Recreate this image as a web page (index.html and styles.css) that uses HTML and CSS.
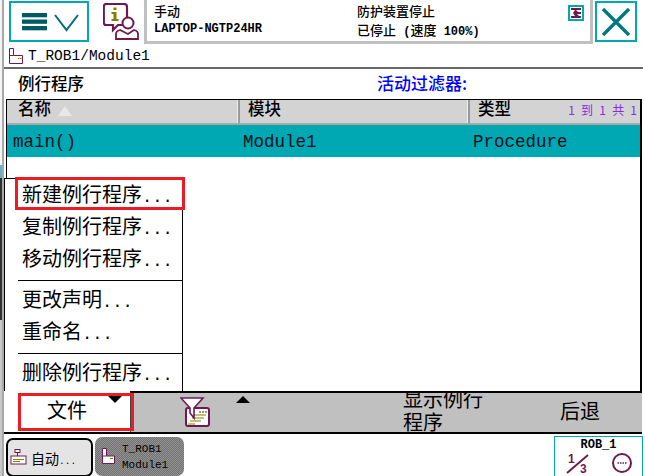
FILE: index.html
```html
<!DOCTYPE html>
<html lang="zh">
<head>
<meta charset="utf-8">
<title>例行程序</title>
<link rel="stylesheet" href="styles.css">
</head>
<body>
<div class="edge"></div>
<div class="app">
  <header class="top">
    <button class="menu-btn">
      <svg width="70" height="36" viewBox="0 0 70 36"><g fill="#005a64"><rect x="11" y="9" width="25" height="4.300"/><rect x="11" y="15.500" width="25" height="4.300"/><rect x="11" y="22" width="25" height="4.300"/></g><path d="M44 11 L55.500 26 L67 11" fill="none" stroke="#006e78" stroke-width="2"/></svg>
    </button>
    <svg class="info" width="38" height="38" viewBox="0 0 38 38"><path d="M3 1 H21 Q24 1 24 4 V19 Q24 22 21 22 H15 L10 27 V22 H3 Q0.800 22 0.800 19 V4 Q0.800 1 3 1 Z" fill="#fff" stroke="#6e1a50" stroke-width="2.200"/><rect x="10.500" y="4.500" width="3" height="2.500" fill="#808000"/><path d="M8.500 9 H13.500 V16 H15.500 V18 H8.500 V16 H10.500 V11 H8.500 Z" fill="#808000"/><circle cx="25" cy="20" r="5.500" fill="#fff" stroke="#6e1a50" stroke-width="2"/><path d="M13 36 V31 Q13 28 17 27 L25 31 L31 27 Q35 28 35 31 V36 Z" fill="#fff" stroke="#6e1a50" stroke-width="1.800"/></svg>
    <div class="status">
      <div class="col-a">
        <div class="cjk">手动</div>
        <div class="lat">LAPTOP-NGTP24HR</div>
      </div>
      <div class="col-b">
        <div class="cjk">防护装置停止</div>
        <div class="cjk">已停止<span class="lat"> (</span>速度<span class="lat"> 100%)</span></div>
      </div>
      <svg class="mini" width="16" height="16" viewBox="0 0 16 16"><rect x="1" y="1" width="14" height="14" fill="#fff" stroke="#00a8b4" stroke-width="2"/><path d="M3 3 H13 V5 H8 L10 7 H13 V9 L9 9 L11 11 H13 V13 H3 V11 H7 L5 8 L7 5 H3 Z" fill="#6e1a50"/></svg>
    </div>
    <button class="close-btn">
      <svg width="36" height="36" viewBox="0 0 36 36"><path d="M5 5 L31 31 M31 5 L5 31" stroke="#007882" stroke-width="3.400"/></svg>
    </button>
  </header>

  <div class="path">
    <svg width="16" height="16" viewBox="0 0 16 16"><path d="M1.500 .5 H5.500 V7.500 H14.500 V15.500 H1.500 Z M1.500 7.500 H5.500" fill="#fff" stroke="#6e1a50" stroke-width="1"/><rect x="10" y="10" width="1.500" height="1" fill="#808000"/><rect x="12" y="10" width="1.500" height="1" fill="#808000"/></svg>
    <span class="path-text">T_ROB1/Module1</span>
  </div>

  <main class="content">
    <div class="title-row">
      <span class="title">例行程序</span>
      <span class="filter">活动过滤器:</span>
    </div>
    <div class="table">
      <div class="thead">
        <div class="th c1">名称<span class="sort"></span></div>
        <div class="th c2">模块</div>
        <div class="th c3">类型<span class="count">1 到 1 共 1</span></div>
      </div>
      <div class="row">
        <div class="c1">main()</div>
        <div class="c2">Module1</div>
        <div class="c3">Procedure</div>
      </div>
    </div>

    <div class="menu">
      <div class="item hot">新建例行程序<span class="dots">...</span></div>
      <div class="item">复制例行程序<span class="dots">...</span></div>
      <div class="item">移动例行程序<span class="dots">...</span></div>
      <div class="sep"></div>
      <div class="item">更改声明<span class="dots">...</span></div>
      <div class="item">重命名<span class="dots">...</span></div>
      <div class="sep"></div>
      <div class="item">删除例行程序<span class="dots">...</span></div>
    </div>
  </main>

  <nav class="cmd">
    <div class="cmd-file"><span>文件</span><i class="tri-down"></i></div>
    <div class="cmd-rest">
      <div class="cmd-filter">
        <svg width="32" height="32" viewBox="0 0 32 32"><rect x="6" y="11" width="23" height="18" rx="2" fill="#fff" stroke="#6e1a50" stroke-width="2"/><rect x="19" y="14" width="2" height="2" fill="#a0a060"/><rect x="22" y="14" width="2" height="2" fill="#a0a060"/><rect x="25" y="14" width="2" height="2" fill="#a0a060"/><path d="M13 18 H26 M12 21 H24 M10 24 H21 M8 27 H15" stroke="#808000" stroke-width="1"/><path d="M1 1 H23 L14 11 V21 L10 16 V11 Z" fill="#fff" stroke="#6e1a50" stroke-width="1.600"/></svg>
        <i class="tri-up"></i>
      </div>
      <div class="cmd-show">显示例行程序</div>
      <div class="cmd-back">后退</div>
    </div>
  </nav>

  <footer class="task">
    <button class="task-auto">
      <svg width="17" height="17" viewBox="0 0 17 17"><rect x="5" y="0.500" width="5" height="3" fill="#fff" stroke="#6e1a50"/><path d="M7.500 3 V7" stroke="#6e1a50"/><rect x="1" y="7" width="15" height="8" fill="#fff" stroke="#6e1a50"/><path d="M3 10.500 H14 M3 12.500 H10" stroke="#808000"/></svg>
      <span>自动<span class="dots">...</span></span>
    </button>
    <button class="task-mod">
      <svg width="16" height="17" viewBox="0 0 16 17"><path d="M2.500 .5 H6.500 V8 H14.500 V15.500 H2.500 Z M2.500 8 H6.500" fill="#fff" stroke="#6e1a50"/><rect x="10" y="10" width="3" height="1" fill="#808000"/></svg>
      <span class="task-text">T_ROB1<br>Module1</span>
    </button>
    <div class="quick">
      <div class="quick-name">ROB_1</div>
      <div class="quick-icons">
        <svg width="26" height="22" viewBox="0 0 26 22"><text x="2" y="10" class="frac">1</text><path d="M1 20 L22 2" stroke="#6e1a50" stroke-width="2"/><text x="14" y="20" class="frac">3</text></svg>
        <svg width="22" height="22" viewBox="0 0 22 22"><circle cx="11" cy="10" r="9" fill="none" stroke="#6e1a50" stroke-width="2"/><path d="M6.500 10 H15.500" stroke="#6e1a50" stroke-width="1.600" stroke-dasharray="1.500 1"/></svg>
      </div>
    </div>
  </footer>
</div>
</body>
</html>
```
FILE: styles.css
```css
*, *::after { box-sizing: border-box; }
html, body { margin: 0; padding: 0; }
body {
  width: 645px;
  height: 476px;
  overflow: hidden;
  background: #fff;
  display: flex;
  font-family: "Liberation Mono", "Noto Sans CJK SC", monospace;
  color: #000;
}
button { font: inherit; padding: 0; margin: 0; color: inherit; }
.edge {
  width: 4px;
  flex: none;
  background:
    linear-gradient(#a8a8a8 0 0) right / 2px 100% no-repeat,
    linear-gradient(#f4f4f4 0 165px, #5fb4c8 165px 178px, #303030 178px 320px, #c8c8c8 320px);
}
.app { width: 641px; display: flex; flex-direction: column; }

.top { height: 44px; display: flex; align-items: flex-start; flex: none; }
.menu-btn {
  width: 80px; height: 41px; margin: 1px 0 0 5px;
  border: 2px solid #00a8b4; background: #fff;
  display: flex; align-items: center; flex: none;
}
.info { margin: 3px 0 0 14px; flex: none; }
.status {
  width: 449px; height: 44px; margin-left: 3px; flex: none;
  border: solid #c0c0c0; border-width: 0 3px 3px 3px;
  display: flex; padding: 0 0 0 7px; position: relative;
}
.col-a > div, .col-b > div { height: 19px; line-height: 19px; white-space: nowrap; }
.col-a > div:first-child, .col-b > div:first-child { margin-top: 1px; }
.col-a { width: 203px; }
.col-b { flex: 1; }
.cjk { font-family: "Noto Sans CJK SC", sans-serif; font-size: 13px; font-weight: 500; }
.lat { font-family: "Liberation Mono", monospace; font-weight: 700; font-size: 12px; white-space: pre; }
.mini { position: absolute; top: 5px; right: 6px; }
.close-btn {
  width: 42px; height: 41px; margin: 1px 0 0 2px;
  border: 2px solid #00a8b4; background: #fff;
  display: flex; align-items: center; justify-content: center; flex: none;
}

.path {
  height: 25px; display: flex; align-items: center; gap: 4px; padding-left: 4px;
  border-bottom: 2px solid #696969; flex: none; margin-right: 2px;
}
.path-text { font-size: 14.500px; }

.content { height: 322px; flex: none; position: relative; }
.title-row { height: 30px; position: relative; display: flex; }
.title { font-family: "Noto Sans CJK SC", sans-serif; font-size: 16.500px; font-weight: 500; margin: 4px 0 0 14px; line-height: 20px; }
.filter { font-family: "Noto Sans CJK SC", sans-serif; font-size: 17px; font-weight: 500; color: #0000ff; position: absolute; left: 373px; top: 4px; line-height: 20px; }

.table {
  margin-left: 2px; width: 636px; height: 292px;
  border: solid #000; border-width: 1px 2px 0 1px;
}
.thead { height: 25px; display: flex; background: #d3d3d3; border-bottom: 2px solid #a8a8a8; }
.th { font-family: "Noto Sans CJK SC", sans-serif; font-size: 16.500px; font-weight: 500; line-height: 16px; position: relative; border-right: 2px solid #9a9a9a; box-shadow: inset -1px 0 #eee; padding-left: 8px; display: flex; }
.c1 { width: 233px; }
.c2 { width: 230px; }
.c3 { flex: 1; }
.thead .c3 { border-right: 0; box-shadow: none; }
.thead .c1 { padding-left: 11px; }
.sort { width: 0; height: 0; border: 7px solid transparent; border-top: 0; border-bottom: 10px solid #e8e8e8; margin: 6px 0 0 7px; box-sizing: content-box; }
.count { position: absolute; right: 3px; top: 0; line-height: 20px; font-size: 12px; color: #8a2be2; font-weight: 400; word-spacing: 3.500px; }
.row { height: 32px; background: #00a8b4; display: flex; font-size: 17.500px; line-height: 35px; color: #001020; }
.row .c1 { padding-left: 6px; }
.row .c2 { padding-left: 3px; }
.row .c3 { padding-left: 3px; }

.menu {
  position: absolute; left: 0; top: 109px; width: 179px; height: 213px;
  background: #fff; border: solid #000; border-width: 1px 1px 0 1px;
  padding-left: 13px;
  font-family: "Noto Sans CJK SC", sans-serif; font-size: 20px;
}
.item { height: 32px; line-height: 30px; padding-left: 4px; white-space: nowrap; position: relative; }
.dots { font-family: "Liberation Mono", monospace; font-size: 17px; }
.hot::after { content: ""; position: absolute; left: -3px; top: -2px; width: 170px; height: 33px; border: 3px solid #ed1c24; }
.sep { height: 1px; background: #000; margin: 5px 0 3px 0; width: 164px; }

.cmd { height: 43px; display: flex; flex: none; font-family: "Noto Sans CJK SC", sans-serif; font-size: 20px; border-bottom: 2px solid #000; width: 638px; position: relative; }
.cmd-file { width: 126px; background: #fff; position: relative; display: flex; justify-content: center; align-items: center; padding-bottom: 5px; flex: none; }
.cmd-file::after { content: ""; position: absolute; left: 14px; top: 2px; width: 116px; height: 38px; border: 3px solid #ed1c24; z-index: 2; }
.tri-down { position: absolute; left: 104px; top: 5px; border: 7px solid transparent; border-bottom: 0; border-top: 7px solid #000; }
.cmd-rest { flex: 1; display: flex; background: #c0c0c0; border-top: 2px solid #000; border-left: 1px solid #444; overflow: hidden; }
.cmd-filter { width: 272px; display: flex; padding: 4px 0 0 49px; flex: none; }
.tri-up { border: 7px solid transparent; border-top: 0; border-bottom: 7px solid #000; margin: -1px 0 0 24px; height: 7px; box-sizing: content-box; height: 0; }
.cmd-show { width: 84px; line-height: 23px; margin-top: -6px; flex: none; }
.cmd-back { flex: 1; line-height: 36px; padding-left: 73px; }

.task { height: 42px; display: flex; align-items: flex-start; flex: none; position: relative; padding-top: 4px; }
.task-auto {
  width: 87px; height: 39px; margin-left: 2px;
  border: 2px solid #000; border-radius: 7px; background: #e4e4e4;
  display: flex; align-items: center; gap: 4px; padding-left: 2px;
  font-family: "Noto Sans CJK SC", sans-serif; font-size: 14px; flex: none;
}
.task-auto .dots { font-size: 9.500px; }
.task-mod {
  width: 89px; height: 39px; margin: -1px 0 0 2px;
  border: 0; border-radius: 7px;
  background: conic-gradient(#727272 25%, #929292 0 50%, #727272 0 75%, #929292 0) 0 0 / 2px 2px;
  display: flex; align-items: center; gap: 6px; padding-left: 5px;
  font-size: 11px; text-align: left; line-height: 16px; flex: none;
}
.quick {
  position: absolute; right: 2px; top: 2px; width: 89px; height: 40px;
  border: solid #00a8b4; border-width: 1px 1px 0 1px; background: #fff;
  text-align: center;
}
.quick-name { font-weight: 700; font-size: 12px; line-height: 16px; }
.quick-icons { display: flex; justify-content: space-between; padding: 0 9px 0 11px; }
.frac { font-family: "Liberation Sans", sans-serif; font-weight: 700; font-size: 12px; fill: #6e1a50; }
```
